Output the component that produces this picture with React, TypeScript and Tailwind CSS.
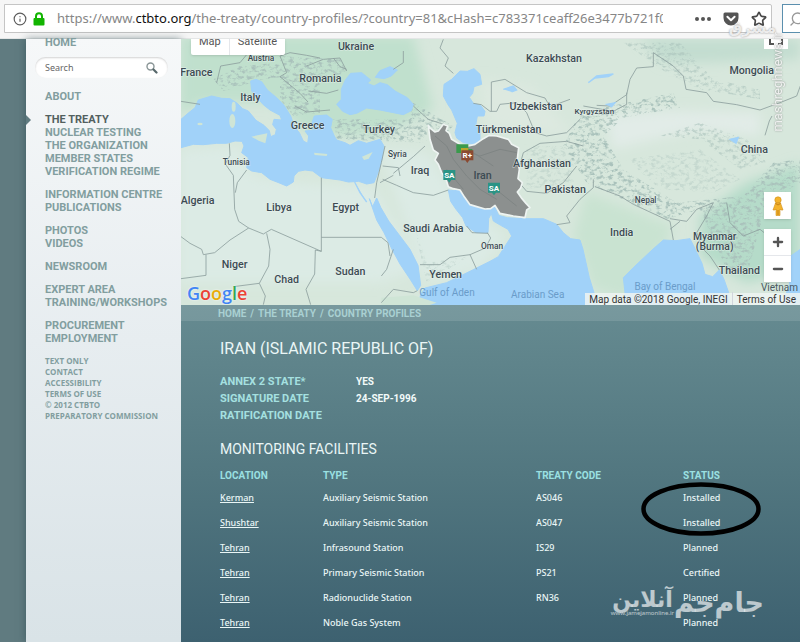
import React from "react";
import { Info, Star, Search, Plus, Minus } from "lucide-react";

const menuGroups = [
  ["ABOUT"],
  ["THE TREATY", "NUCLEAR TESTING", "THE ORGANIZATION", "MEMBER STATES", "VERIFICATION REGIME"],
  ["INFORMATION CENTRE", "PUBLICATIONS"],
  ["PHOTOS", "VIDEOS"],
  ["NEWSROOM"],
  ["EXPERT AREA", "TRAINING/WORKSHOPS"],
  ["PROCUREMENT", "EMPLOYMENT"],
];

const footerLinks = ["TEXT ONLY", "CONTACT", "ACCESSIBILITY", "TERMS OF USE", "© 2012 CTBTO", "PREPARATORY COMMISSION"];

const facts = [
  { label: "ANNEX 2 STATE*", value: "YES" },
  { label: "SIGNATURE DATE", value: "24-SEP-1996" },
  { label: "RATIFICATION DATE", value: "" },
];

const facilities = [
  { location: "Kerman", type: "Auxiliary Seismic Station", code: "AS046", status: "Installed" },
  { location: "Shushtar", type: "Auxiliary Seismic Station", code: "AS047", status: "Installed" },
  { location: "Tehran", type: "Infrasound Station", code: "IS29", status: "Planned" },
  { location: "Tehran", type: "Primary Seismic Station", code: "PS21", status: "Certified" },
  { location: "Tehran", type: "Radionuclide Station", code: "RN36", status: "Planned" },
  { location: "Tehran", type: "Noble Gas System", code: "", status: "Planned" },
];

// label, x, baseline y, size - all in map units
const countries: [string, number, number, number][] = [
  ["Ukraine", 528, 41, 32],
  ["Austria", 243, 76, 25],
  ["France", 49, 119, 32],
  ["Romania", 421, 137, 32],
  ["Italy", 211, 195, 32],
  ["Greece", 383, 279, 32],
  ["Turkey", 597, 291, 32],
  ["Tunisia", 169, 388, 25],
  ["Algeria", 53, 505, 32],
  ["Libya", 297, 526, 32],
  ["Egypt", 497, 526, 32],
  ["Niger", 164, 697, 32],
  ["Chad", 320, 741, 32],
  ["Sudan", 511, 717, 32],
  ["Kazakhstan", 1122, 78, 32],
  ["Uzbekistan", 1068, 223, 32],
  ["Kyrgyzstan", 1243, 233, 24],
  ["Türkmenistan", 986, 290, 32],
  ["Syria", 652, 364, 25],
  ["Iraq", 720, 413, 32],
  ["Iran", 908, 429, 32],
  ["Afghanistan", 1086, 394, 32],
  ["Pakistan", 1156, 470, 32],
  ["Saudi Arabia", 760, 589, 32],
  ["Oman", 936, 640, 25],
  ["Yemen", 797, 726, 32],
  ["Mongolia", 1715, 113, 32],
  ["China", 1723, 351, 32],
  ["Nepal", 1397, 500, 25],
  ["India", 1325, 600, 32],
  ["Myanmar", 1604, 613, 31],
  ["(Burma)", 1604, 642, 31],
  ["Thailand", 1678, 714, 32],
];

const seas: [string, number, number][] = [
  ["Gulf of Aden", 801, 780],
  ["Arabian Sea", 1073, 786],
  ["Bay of Bengal", 1455, 762],
];

const waters = [
  "M3 250 L24 232 45 215 55 192 95 180 125 187 150 188 172 202 188 218 205 225 228 253 252 268 268 284 272 302 286 296 289 280 278 266 282 250 305 252 300 238 270 222 250 206 236 190 215 165 212 135 228 130 245 137 262 162 290 185 312 208 332 240 345 275 358 290 370 315 383 322 386 300 375 285 402 282 396 260 403 240 440 237 457 250 452 275 463 300 470 312 495 320 510 328 535 314 560 322 600 310 612 330 606 370 594 410 582 440 560 444 536 436 505 438 480 432 425 425 398 405 375 402 355 406 342 420 340 438 320 450 296 440 270 430 245 410 215 405 200 395 205 365 185 350 192 330 186 316 165 315 140 322 110 322 70 326 40 325 3 335Z",
  "M470 205 L484 190 484 160 496 132 512 112 545 110 560 122 572 132 562 142 582 150 600 140 622 146 645 165 682 185 700 205 694 224 670 236 640 230 600 222 560 216 530 232 510 236 488 226Z",
  "M586 124 L600 104 630 92 652 102 634 120 612 128Z",
  "M840 105 L862 106 882 98 900 115 905 145 882 152 878 172 868 184 880 202 902 208 915 226 912 240 892 240 888 262 900 280 900 312 880 325 850 320 830 306 825 290 832 262 815 222 804 206 790 180 792 145 815 130Z",
  "M805 462 L822 464 840 462 850 484 866 500 890 510 912 520 945 514 956 538 982 545 1030 548 1090 548 1130 565 1150 590 1172 608 1200 612 1209 640 1218 680 1228 725 1245 780 1256 810 715 810 722 775 735 756 800 740 882 700 930 676 955 662 974 632 995 600 984 580 962 568 940 555 934 532 926 548 924 590 888 590 858 570 848 545 828 520 812 496Z",
  "M568 488 L578 512 590 486 602 514 626 555 660 600 690 640 714 688 722 748 712 764 692 732 660 684 636 640 612 590 590 552Z",
  "M1332 810 L1336 780 1330 725 1365 690 1416 642 1450 612 1488 614 1530 608 1546 640 1566 682 1575 715 1598 722 1618 702 1632 730 1646 770 1650 810Z",
  "M1802 810 L1828 750 1832 660 1861 640 1861 810Z",
];

const borders = [
  "M3 602 L30 622 65 640 70 656 104 650 150 612 206 576 250 594 274 580 424 646 424 425",
  "M424 604 L604 604 M148 322 L150 358 136 384 160 418 164 520 176 556 206 576 M200 402 L172 440 166 470",
  "M78 656 L78 718 3 728 M260 592 L270 640 266 690 238 742 160 752 M424 646 L406 642 404 714 378 760 392 806",
  "M238 742 L256 780 250 806 M604 604 L624 620 630 660",
  "M110 140 L122 90 180 80 205 50 M300 60 L330 50 380 58 420 66 M205 50 L160 20 M300 60 L320 110 300 122 M380 90 L430 70 480 66 500 105 M385 165 L440 172 475 162 M345 210 L380 228 450 222 M300 122 L360 172 384 198",
  "M460 66 L480 92 500 100 M60 205 L3 196 M615 330 L604 380 590 440 584 486 M640 412 L700 362 735 330",
  "M608 430 L650 448 700 470 760 478 805 462 M608 390 L655 395 660 420 M640 418 L600 440",
  "M720 686 L780 686 810 664 870 656 890 700 M922 590 L932 606 916 636 870 656 M860 570 L876 590 924 592",
  "M790 10 L780 36 805 66 795 90 820 112 M670 45 L670 80 640 100 M700 210 L745 250 800 268",
  "M934 226 L934 138 975 130 1040 170 1095 186 1110 212 1170 190 M880 202 L904 206 930 226 950 226 960 205 1010 200 1040 230 1065 290 1100 300 1160 290 1200 250",
  "M1016 400 L1030 350 1080 322 1160 316 1210 330 M1016 438 L1040 466 1100 472 1150 440 1190 390 M1200 490 L1160 540 1170 560 1130 566",
  "M1200 490 L1240 455 1240 430 M1245 452 L1320 480 1360 505 1470 556 1480 612 M1470 548 L1520 556 1550 520 1600 500 M1470 580 L1500 556",
  "M1250 208 L1290 210 1340 176 1350 130 1370 96 1420 92 1420 50 M1420 50 L1480 90 1510 120 1518 160 1580 170 1600 196 1670 206 1740 222 1800 200 1850 180 1861 150",
  "M1340 170 L1340 205 1300 226 1210 210 M1755 298 L1768 255 1776 240",
  "M1618 702 L1590 660 1570 640 1550 590 1580 540 1600 500 M1640 500 L1650 560 1690 600 1740 580 1790 620",
  "M604 800 L640 760 700 770 712 764 M640 640 L620 700 604 720",
];

const rivers = "M524 438 L540 470 560 498 M1225 140 L1250 120 1300 114 1285 122 1245 126Z M970 160 L1000 150 1010 162 995 168 M1280 205 L1305 200 1295 212Z M1650 310 L1675 304 1668 322Z";

const iran =
  "M745 268 L752 278 765 288 775 285 790 265 803 270 798 284 808 292 815 310 840 325 865 330 885 325 910 308 928 298 950 300 985 310 995 325 1016 335 1012 370 1018 400 1014 428 1027 440 1022 456 1012 468 1026 488 1038 502 1050 515 1040 522 1035 545 1000 540 960 532 945 508 932 518 915 519 890 512 870 506 854 484 840 462 820 458 805 452 798 430 785 410 775 385 765 372 775 352 760 342 750 310Z";

const UrlBar = () => (
  <header className="flex h-[39px] items-start gap-2.5 overflow-hidden border-b border-[#e4e6e6] bg-[#f6f6f6] pl-1 pt-1">
    <div className="flex h-[29px] min-w-0 flex-1 items-center rounded-r-xs border border-[#c5c5c5] bg-white pl-2">
      <Info className="mr-1.5 size-3.5 shrink-0 text-[#5c5c5c]" strokeWidth={2} />
      <svg viewBox="0 0 12 14" className="mr-3 h-3.5 w-3 shrink-0">
        <path d="M3 7V4.200a3 3 0 0 1 6 0V7" stroke="#12b400" strokeWidth="2" fill="none" />
        <rect x="0.500" y="6" width="11" height="7.500" rx="1" fill="#12b400" />
      </svg>
      <div
        role="textbox"
        aria-label="Address"
        className="min-w-0 flex-1 overflow-hidden whitespace-nowrap font-['Noto_Sans',sans-serif] text-[13px] text-[#868686]"
      >
        https://www.<span className="text-[#111]">ctbto.org</span>
        /the-treaty/country-profiles/?country=81&amp;cHash=c783371ceaff26e3477b721f0
      </div>
      <div className="flex shrink-0 items-center gap-3 pl-8 pr-1">
        <button aria-label="Page actions" className="flex gap-0.5">
          <span className="size-1 rounded-full bg-[#555]" />
          <span className="size-1 rounded-full bg-[#555]" />
          <span className="size-1 rounded-full bg-[#555]" />
        </button>
        <button aria-label="Save to Pocket">
          <svg viewBox="0 0 16 16" className="size-4">
            <path d="M2 1.5h12a1.5 1.5 0 0 1 1.5 1.5v4a7.5 7.5 0 0 1-15 0V3A1.5 1.5 0 0 1 2 1.5z" fill="#555" />
            <path d="M4.4 5.8 8 9.2l3.6-3.4" stroke="white" strokeWidth="2" fill="none" strokeLinecap="round" strokeLinejoin="round" />
          </svg>
        </button>
        <button aria-label="Bookmark">
          <Star className="size-4 text-[#484848]" strokeWidth={2.5} />
        </button>
      </div>
    </div>
    <button aria-label="Search the web" className="flex h-[29px] w-[18px] shrink-0 items-center border border-r-0 border-[#5b8fae] bg-white pl-1.5">
      <Search className="size-4 shrink-0 -scale-x-100 text-[#999]" />
    </button>
  </header>
);

const Sidebar = () => (
  <aside className="w-[155px] shrink-0 bg-linear-to-b from-[#f6f8f9] via-[#e7edf0] to-[#d9e3e7] pl-[19px] font-[Roboto,sans-serif] shadow-[0_0_8px_rgba(30,60,65,0.5)]">
    <nav className="text-[11px] font-bold leading-[13px] text-[#829e9f]">
      <a href="#home" className="-mt-[3px] block">HOME</a>
      <form className="-ml-2.5 mb-3 mt-2 flex h-[21px] w-[133px] items-center justify-between rounded-full bg-white pl-2.5 pr-2.5 shadow-[inset_0_1px_2px_rgba(0,0,0,0.18)]">
        <input
          aria-label="Search"
          placeholder="Search"
          className="w-20 bg-transparent font-['Noto_Sans',sans-serif] text-[9px] font-normal outline-none placeholder:text-[#666]"
        />
        <button type="button" aria-label="Go">
          <svg viewBox="0 0 12 12" className="size-3" fill="none">
            <circle cx="4.500" cy="4.500" r="3.500" stroke="#8a9697" strokeWidth="1.400" />
            <path d="M7.500 7.500 10.500 10.500" stroke="#56676a" strokeWidth="2.200" strokeLinecap="round" />
          </svg>
        </button>
      </form>
      {menuGroups.map((group) => (
        <ul key={group[0]} className="mb-2.5">
          {group.map((item) => (
            <li key={item} className={item === "THE TREATY" ? "relative text-[#52605f]" : ""}>
              {item === "THE TREATY" && (
                <span className="absolute -left-[19px] top-0.5 border-y-[5px] border-l-[5px] border-y-transparent border-l-[#607b80]" />
              )}
              <a href="#menu">{item}</a>
            </li>
          ))}
        </ul>
      ))}
    </nav>
    <ul className="mt-2.5 font-['Open_Sans',sans-serif] text-[8px] font-bold leading-[11px] text-[#829e9f]">
      {footerLinks.map((item) => (
        <li key={item} className="whitespace-nowrap">
          <a href="#footer">{item}</a>
        </li>
      ))}
    </ul>
  </aside>
);

const MapMarker = ({ x, y, label, color }: { x: number; y: number; label: string; color: string }) => (
  <g>
    <path d={`M${x - 18} ${y - 15}h36v30h-12l-6 8-6-8h-12z`} fill={color} />
    <text x={x} y={y + 9} textAnchor="middle" fontSize="24" fontWeight="700" fill="white">
      {label}
    </text>
  </g>
);

const MapPanel = () => (
  <section aria-label="Map" className="relative h-[266px] overflow-hidden bg-[#dbe9e1]">
    <svg viewBox="3 9 1857 798" preserveAspectRatio="xMidYMid slice" className="block h-full w-full font-[Roboto,sans-serif]">
      <defs>
        <filter id="relief" x="0" y="0" width="100%" height="100%">
          <feTurbulence type="fractalNoise" baseFrequency="0.07 0.1" numOctaves="4" seed="8" />
          <feColorMatrix values="0 0 0 0 0.4  0 0 0 0 0.54  0 0 0 0 0.5  4 0 0 0 -1.9" />
          <feComposite in2="SourceGraphic" operator="in" />
        </filter>
        <filter id="soft" x="-20%" y="-20%" width="140%" height="140%">
          <feGaussianBlur stdDeviation="18" />
        </filter>
      </defs>
      <rect x="3" y="9" width="1858" height="800" fill="#d7e7dc" />
      <g filter="url(#soft)">
        <path d="M0 0H700L760 220 600 300H480L380 290 280 200 60 200 0 240Z" fill="#c0e0cd" />
        <path d="M0 340 180 330 220 420 360 440 580 450 720 700 600 740 0 740Z" fill="#dcebe5" />
        <path d="M600 340 740 350 840 500 980 600 900 700 740 740Z" fill="#dcebe5" />
        <path d="M900 130 1050 150 1180 300 920 270Z" fill="#dde9e0" />
        <path d="M1280 240 1460 225 1740 230 1740 300 1560 280 1420 310 1300 340Z" fill="#e2ece8" />
        <path d="M1700 440 1860 380V700L1700 740 1560 660 1560 540Z" fill="#b5dbc9" />
        <path d="M1220 470 1480 570 1460 620 1340 790 1240 760 1180 600Z" fill="#c9e3d1" />
        <path d="M1380 10H1860V70L1600 80 1450 80Z" fill="#c3ddd0" />
      </g>
      <g filter="url(#relief)">
        <path d="M100 130 180 90 300 80 330 120 250 130 130 165Z M300 60 480 70 500 110 420 130 420 230 340 240 300 190Z M700 200 820 270 790 300 690 250Z M460 250 740 250 740 320 470 310Z" />
        <path d="M1200 230 1480 170 1500 215 1330 245 1270 300 1330 400 1490 500 1690 480 1780 380 1860 370V440L1760 500 1700 720 1640 700 1560 520 1460 550 1220 440 1150 330Z" />
        <path d="M1330 20 1500 20 1600 130 1740 160 1740 190 1560 160 1460 110Z M1440 300 1560 260 1700 310 1760 380 1680 400 1560 310Z" opacity="0.6" />
        <path d="M1340 370 1560 340 1680 430 1600 470 1440 460Z M700 560 740 680 870 660 740 740Z M1040 330 1180 330 1180 440 1040 460Z" opacity="0.4" />
      </g>
      {waters.map((d, i) => (
        <path key={i} d={d} fill="#a1d2f9" stroke="#a1d2f9" strokeWidth="3" strokeLinejoin="round" />
      ))}
      <g fill="#cfe5d6">
        <ellipse cx="157" cy="255" rx="9" ry="21" />
        <ellipse cx="161" cy="212" rx="6" ry="15" />
        <path d="M214 302 262 292 256 322 236 314Z" />
        <path d="M402 350 442 354 440 360 404 357Z" />
        <path d="M546 362 578 348 566 368 552 372Z" />
        <ellipse cx="60" cy="264" rx="8" ry="4" />
        <path d="M604 785 700 778 770 800 740 810H604Z" />
      </g>
      <g fill="none" stroke="#8d9f9e" strokeWidth="2.5" strokeLinejoin="round">
        {borders.map((d, i) => (
          <path key={i} d={d} />
        ))}
      </g>
      <path d={rivers} fill="#a1d2f9" stroke="#a1d2f9" strokeWidth="4" />
      <path d={iran} fill="#8c908f" stroke="#eef4f2" strokeWidth="5" strokeLinejoin="round" />
      <path
        d="M765 300 800 330 820 370 860 420 900 460 950 490 M840 340 900 360 960 340 1010 350 M880 350 940 390 M800 400 850 460 M960 470 1010 510"
        fill="none"
        stroke="#7f8584"
        strokeWidth="3"
      />
      <path d="M829 325h36v14h12v12h-48z" fill="#3a9a4c" />
      <path d="M843 336h22v16h-22z" fill="#b9a52b" />
      <MapMarker x={862} y={358} label="R+" color="#8a4a32" />
      <MapMarker x={808} y={417} label="SA" color="#2a9485" />
      <MapMarker x={942} y={455} label="SA" color="#2a9485" />
      <g textAnchor="middle" fontWeight="500" fill="#3c4b53" stroke="#eef5f1" strokeOpacity="0.7" paintOrder="stroke">
        {countries.map(([name, x, y, size]) => (
          <text key={name} x={x} y={y} fontSize={size} strokeWidth={name === "Iran" ? 0 : 3}>
            {name}
          </text>
        ))}
      </g>
      <g textAnchor="middle" fontSize="30" fill="#6a9cc9">
        {seas.map(([name, x, y]) => (
          <text key={name} x={x} y={y}>
            {name}
          </text>
        ))}
      </g>
    </svg>

    <div className="absolute left-2.5 top-0 flex h-4 items-start rounded-b-xs bg-white font-[Roboto,sans-serif] text-[11px] leading-[6px] text-[#555] shadow-sm">
      <button className="h-4 border-r border-gray-200 px-2 pb-2.5">Map</button>
      <button className="h-4 px-2 pb-2.5">Satellite</button>
    </div>
    <button aria-label="Full screen" className="absolute right-3 top-0 flex h-2.5 w-6 items-start justify-center bg-white">
      <svg viewBox="0 0 14 6" className="h-1.5 w-3.5">
        <path d="M1 0v5h4M13 0v5H9" stroke="#555" strokeWidth="2" fill="none" />
      </svg>
    </button>
    <button aria-label="Street View" className="absolute bottom-[86px] right-[9px] flex size-[27px] items-center justify-center bg-white shadow-sm">
      <svg viewBox="0 0 12 20" className="h-5 w-3">
        <circle cx="6" cy="4" r="3.2" fill="#f4b32c" stroke="#cf8f1b" strokeWidth="0.6" />
        <path d="M3.5 7h5L11 14H9l-1-1v6.500H4V13l-1 1H1z" fill="#f4b32c" stroke="#cf8f1b" strokeWidth="0.6" />
        <path d="M3.500 7.500 6 9l2.500-1.500M6 14v5" stroke="#b9740f" strokeWidth="0.8" fill="none" />
      </svg>
    </button>
    <div className="absolute bottom-[23px] right-[9px] flex w-[27px] flex-col bg-white text-[#555] shadow-sm">
      <button aria-label="Zoom in" className="flex h-[26px] items-center justify-center">
        <Plus className="size-3.5" strokeWidth={4} />
      </button>
      <button aria-label="Zoom out" className="flex h-[27px] items-center justify-center border-t border-gray-200">
        <Minus className="size-3.5" strokeWidth={4} />
      </button>
    </div>
    <a href="#google" className="absolute bottom-0 left-1.5 font-['Open_Sans',sans-serif] text-[18px] font-semibold leading-6 [text-shadow:0_0_2px_white]">
      <span className="text-[#4285f4]">G</span>
      <span className="text-[#ea4335]">o</span>
      <span className="text-[#e8ac08]">o</span>
      <span className="text-[#4285f4]">g</span>
      <span className="text-[#34a853]">l</span>
      <span className="text-[#ea4335]">e</span>
    </a>
    <div className="absolute bottom-0 right-0 flex flex-col items-end font-[Roboto,sans-serif] text-[10px]">
      <span className="pr-0.5 leading-[11px] text-[#4a5960]">Vietnam</span>
      <div className="flex h-3 items-center bg-[#eef4f2]/85 text-[#333]">
        <span className="border-r border-gray-300 px-1">Map data ©2018 Google, INEGI</span>
        <a href="#terms" className="px-1">Terms of Use</a>
      </div>
    </div>
  </section>
);

const CountryProfile = () => (
  <section className="flex-1 bg-linear-to-b from-[#668b91] via-[#527780] to-[#3d6170] font-[Roboto,sans-serif] text-[#eaf6f6]">
    <nav className="flex h-4 gap-1 bg-white/12 pl-[37px] text-[10px] font-bold leading-[17px] text-[#a9d0d2]">
      <a href="#home">HOME</a>/<a href="#treaty">THE TREATY</a>/<a href="#profiles">COUNTRY PROFILES</a>
    </nav>
    <div className="pl-[39px]">
      <h1 className="pt-[18px] text-base leading-[19px]">IRAN (ISLAMIC REPUBLIC OF)</h1>
      <dl className="mt-[15px] text-[11px] font-bold leading-[17px] text-[#a5e0e0]">
        {facts.map((fact) => (
          <div key={fact.label} className="flex">
            <dt className="w-[136px]">{fact.label}</dt>
            <dd className="text-[10px] text-[#f2fafa]">{fact.value}</dd>
          </div>
        ))}
      </dl>
      <h2 className="mt-4 text-sm leading-[18px]">MONITORING FACILITIES</h2>
      <div className="relative mt-[9px] font-['Noto_Sans',sans-serif]">
        <table className="w-full table-fixed text-left text-[9px] font-medium">
          <thead className="font-[Roboto,sans-serif] text-[10px] leading-[18px] text-[#9be0e2]">
            <tr>
              <th className="w-[103px]">LOCATION</th>
              <th className="w-[213px]">TYPE</th>
              <th className="w-[147px]">TREATY CODE</th>
              <th>STATUS</th>
            </tr>
          </thead>
          <tbody>
            {facilities.map((row, index) => (
              <tr key={index} className="h-[25px]">
                <td>
                  <a href="#station" className="underline underline-offset-1">{row.location}</a>
                </td>
                <td>{row.type}</td>
                <td>{row.code}</td>
                <td>{row.status}</td>
              </tr>
            ))}
          </tbody>
        </table>
        <svg viewBox="0 0 120 54" className="absolute right-[39px] top-[15px] h-[54px] w-[120px]">
          <ellipse cx="60" cy="27" rx="57.500" ry="24.500" fill="none" stroke="black" strokeWidth="4.500" />
        </svg>
        <div className="absolute bottom-[18px] right-9 flex items-center text-white/65" dir="rtl">
          <span className="font-['DejaVu_Sans',sans-serif] text-[27px] font-bold leading-7">جام‌جم</span>
          <span className="flex flex-col items-center">
            <span className="font-['DejaVu_Sans',sans-serif] text-[22px] font-bold leading-5">آنلاین</span>
            <span className="text-[6px] leading-1.5" dir="ltr">www.jamejamonline.ir</span>
          </span>
        </div>
      </div>
    </div>
  </section>
);

const App = () => {
  return (
    <div className="relative flex min-h-screen flex-col overflow-hidden bg-[#607b80]">
      <UrlBar />
      <div className="flex flex-1 pl-[26px]">
        <Sidebar />
        <main className="z-10 flex min-w-0 flex-1 flex-col">
          <MapPanel />
          <CountryProfile />
        </main>
      </div>
      <div className="pointer-events-none absolute right-4 top-5 z-20 flex flex-col items-end text-white/80 [text-shadow:0_0_2px_#888]">
        <span className="-mb-1 mr-2 font-['DejaVu_Sans',sans-serif] text-[15px] font-bold leading-4">مشرق</span>
        <span className="rotate-180 font-[Roboto,sans-serif] text-[13px] leading-3 [writing-mode:vertical-rl]">mashreghnews.ir</span>
      </div>
    </div>
  );
};

export default App;
